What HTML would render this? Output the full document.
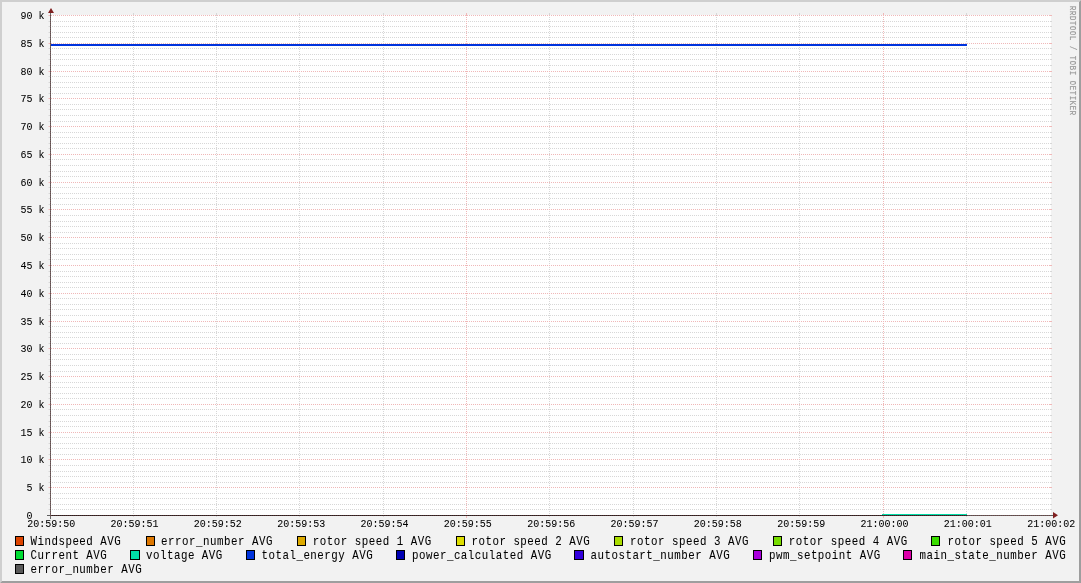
<!DOCTYPE html>
<html><head><meta charset="utf-8"><style>
html,body{margin:0;padding:0;background:#f2f2f2;overflow:hidden;}
svg{display:block;will-change:transform;}
</style></head><body><svg width="1081" height="583" viewBox="0 0 1081 583"><rect x="0" y="0" width="1081" height="583" fill="#f2f2f2"/>
<polygon points="0,583 2,581 2,2 1079,2 1081,0 0,0" fill="#cfcfcf"/>
<polygon points="2,581 1079,581 1079,2 1081,0 1081,583 0,583" fill="#9e9e9e"/>
<rect x="50" y="15" width="1001" height="500" fill="#ffffff"/>
<g shape-rendering="crispEdges"><rect x="48" y="509" width="1" height="1" fill="#d7d7d7" fill-opacity="0.5"/><rect x="49" y="509" width="1" height="1" fill="#d7d7d7"/><rect x="1050" y="509" width="2" height="1" fill="#d7d7d7"/><line x1="50" y1="509.5" x2="1050" y2="509.5" stroke="#d7d7d7" stroke-width="1" stroke-dasharray="1 1"/><rect x="48" y="504" width="1" height="1" fill="#d7d7d7" fill-opacity="0.5"/><rect x="49" y="504" width="1" height="1" fill="#d7d7d7"/><rect x="1050" y="504" width="2" height="1" fill="#d7d7d7"/><line x1="50" y1="504.5" x2="1050" y2="504.5" stroke="#d7d7d7" stroke-width="1" stroke-dasharray="1 1"/><rect x="48" y="498" width="1" height="1" fill="#d7d7d7" fill-opacity="0.5"/><rect x="49" y="498" width="1" height="1" fill="#d7d7d7"/><rect x="1050" y="498" width="2" height="1" fill="#d7d7d7"/><line x1="50" y1="498.5" x2="1050" y2="498.5" stroke="#d7d7d7" stroke-width="1" stroke-dasharray="1 1"/><rect x="48" y="493" width="1" height="1" fill="#d7d7d7" fill-opacity="0.5"/><rect x="49" y="493" width="1" height="1" fill="#d7d7d7"/><rect x="1050" y="493" width="2" height="1" fill="#d7d7d7"/><line x1="50" y1="493.5" x2="1050" y2="493.5" stroke="#d7d7d7" stroke-width="1" stroke-dasharray="1 1"/><rect x="48" y="482" width="1" height="1" fill="#d7d7d7" fill-opacity="0.5"/><rect x="49" y="482" width="1" height="1" fill="#d7d7d7"/><rect x="1050" y="482" width="2" height="1" fill="#d7d7d7"/><line x1="50" y1="482.5" x2="1050" y2="482.5" stroke="#d7d7d7" stroke-width="1" stroke-dasharray="1 1"/><rect x="48" y="476" width="1" height="1" fill="#d7d7d7" fill-opacity="0.5"/><rect x="49" y="476" width="1" height="1" fill="#d7d7d7"/><rect x="1050" y="476" width="2" height="1" fill="#d7d7d7"/><line x1="50" y1="476.5" x2="1050" y2="476.5" stroke="#d7d7d7" stroke-width="1" stroke-dasharray="1 1"/><rect x="48" y="471" width="1" height="1" fill="#d7d7d7" fill-opacity="0.5"/><rect x="49" y="471" width="1" height="1" fill="#d7d7d7"/><rect x="1050" y="471" width="2" height="1" fill="#d7d7d7"/><line x1="50" y1="471.5" x2="1050" y2="471.5" stroke="#d7d7d7" stroke-width="1" stroke-dasharray="1 1"/><rect x="48" y="465" width="1" height="1" fill="#d7d7d7" fill-opacity="0.5"/><rect x="49" y="465" width="1" height="1" fill="#d7d7d7"/><rect x="1050" y="465" width="2" height="1" fill="#d7d7d7"/><line x1="50" y1="465.5" x2="1050" y2="465.5" stroke="#d7d7d7" stroke-width="1" stroke-dasharray="1 1"/><rect x="48" y="454" width="1" height="1" fill="#d7d7d7" fill-opacity="0.5"/><rect x="49" y="454" width="1" height="1" fill="#d7d7d7"/><rect x="1050" y="454" width="2" height="1" fill="#d7d7d7"/><line x1="50" y1="454.5" x2="1050" y2="454.5" stroke="#d7d7d7" stroke-width="1" stroke-dasharray="1 1"/><rect x="48" y="448" width="1" height="1" fill="#d7d7d7" fill-opacity="0.5"/><rect x="49" y="448" width="1" height="1" fill="#d7d7d7"/><rect x="1050" y="448" width="2" height="1" fill="#d7d7d7"/><line x1="50" y1="448.5" x2="1050" y2="448.5" stroke="#d7d7d7" stroke-width="1" stroke-dasharray="1 1"/><rect x="48" y="443" width="1" height="1" fill="#d7d7d7" fill-opacity="0.5"/><rect x="49" y="443" width="1" height="1" fill="#d7d7d7"/><rect x="1050" y="443" width="2" height="1" fill="#d7d7d7"/><line x1="50" y1="443.5" x2="1050" y2="443.5" stroke="#d7d7d7" stroke-width="1" stroke-dasharray="1 1"/><rect x="48" y="437" width="1" height="1" fill="#d7d7d7" fill-opacity="0.5"/><rect x="49" y="437" width="1" height="1" fill="#d7d7d7"/><rect x="1050" y="437" width="2" height="1" fill="#d7d7d7"/><line x1="50" y1="437.5" x2="1050" y2="437.5" stroke="#d7d7d7" stroke-width="1" stroke-dasharray="1 1"/><rect x="48" y="426" width="1" height="1" fill="#d7d7d7" fill-opacity="0.5"/><rect x="49" y="426" width="1" height="1" fill="#d7d7d7"/><rect x="1050" y="426" width="2" height="1" fill="#d7d7d7"/><line x1="50" y1="426.5" x2="1050" y2="426.5" stroke="#d7d7d7" stroke-width="1" stroke-dasharray="1 1"/><rect x="48" y="421" width="1" height="1" fill="#d7d7d7" fill-opacity="0.5"/><rect x="49" y="421" width="1" height="1" fill="#d7d7d7"/><rect x="1050" y="421" width="2" height="1" fill="#d7d7d7"/><line x1="50" y1="421.5" x2="1050" y2="421.5" stroke="#d7d7d7" stroke-width="1" stroke-dasharray="1 1"/><rect x="48" y="415" width="1" height="1" fill="#d7d7d7" fill-opacity="0.5"/><rect x="49" y="415" width="1" height="1" fill="#d7d7d7"/><rect x="1050" y="415" width="2" height="1" fill="#d7d7d7"/><line x1="50" y1="415.5" x2="1050" y2="415.5" stroke="#d7d7d7" stroke-width="1" stroke-dasharray="1 1"/><rect x="48" y="409" width="1" height="1" fill="#d7d7d7" fill-opacity="0.5"/><rect x="49" y="409" width="1" height="1" fill="#d7d7d7"/><rect x="1050" y="409" width="2" height="1" fill="#d7d7d7"/><line x1="50" y1="409.5" x2="1050" y2="409.5" stroke="#d7d7d7" stroke-width="1" stroke-dasharray="1 1"/><rect x="48" y="398" width="1" height="1" fill="#d7d7d7" fill-opacity="0.5"/><rect x="49" y="398" width="1" height="1" fill="#d7d7d7"/><rect x="1050" y="398" width="2" height="1" fill="#d7d7d7"/><line x1="50" y1="398.5" x2="1050" y2="398.5" stroke="#d7d7d7" stroke-width="1" stroke-dasharray="1 1"/><rect x="48" y="393" width="1" height="1" fill="#d7d7d7" fill-opacity="0.5"/><rect x="49" y="393" width="1" height="1" fill="#d7d7d7"/><rect x="1050" y="393" width="2" height="1" fill="#d7d7d7"/><line x1="50" y1="393.5" x2="1050" y2="393.5" stroke="#d7d7d7" stroke-width="1" stroke-dasharray="1 1"/><rect x="48" y="387" width="1" height="1" fill="#d7d7d7" fill-opacity="0.5"/><rect x="49" y="387" width="1" height="1" fill="#d7d7d7"/><rect x="1050" y="387" width="2" height="1" fill="#d7d7d7"/><line x1="50" y1="387.5" x2="1050" y2="387.5" stroke="#d7d7d7" stroke-width="1" stroke-dasharray="1 1"/><rect x="48" y="382" width="1" height="1" fill="#d7d7d7" fill-opacity="0.5"/><rect x="49" y="382" width="1" height="1" fill="#d7d7d7"/><rect x="1050" y="382" width="2" height="1" fill="#d7d7d7"/><line x1="50" y1="382.5" x2="1050" y2="382.5" stroke="#d7d7d7" stroke-width="1" stroke-dasharray="1 1"/><rect x="48" y="371" width="1" height="1" fill="#d7d7d7" fill-opacity="0.5"/><rect x="49" y="371" width="1" height="1" fill="#d7d7d7"/><rect x="1050" y="371" width="2" height="1" fill="#d7d7d7"/><line x1="50" y1="371.5" x2="1050" y2="371.5" stroke="#d7d7d7" stroke-width="1" stroke-dasharray="1 1"/><rect x="48" y="365" width="1" height="1" fill="#d7d7d7" fill-opacity="0.5"/><rect x="49" y="365" width="1" height="1" fill="#d7d7d7"/><rect x="1050" y="365" width="2" height="1" fill="#d7d7d7"/><line x1="50" y1="365.5" x2="1050" y2="365.5" stroke="#d7d7d7" stroke-width="1" stroke-dasharray="1 1"/><rect x="48" y="359" width="1" height="1" fill="#d7d7d7" fill-opacity="0.5"/><rect x="49" y="359" width="1" height="1" fill="#d7d7d7"/><rect x="1050" y="359" width="2" height="1" fill="#d7d7d7"/><line x1="50" y1="359.5" x2="1050" y2="359.5" stroke="#d7d7d7" stroke-width="1" stroke-dasharray="1 1"/><rect x="48" y="354" width="1" height="1" fill="#d7d7d7" fill-opacity="0.5"/><rect x="49" y="354" width="1" height="1" fill="#d7d7d7"/><rect x="1050" y="354" width="2" height="1" fill="#d7d7d7"/><line x1="50" y1="354.5" x2="1050" y2="354.5" stroke="#d7d7d7" stroke-width="1" stroke-dasharray="1 1"/><rect x="48" y="343" width="1" height="1" fill="#d7d7d7" fill-opacity="0.5"/><rect x="49" y="343" width="1" height="1" fill="#d7d7d7"/><rect x="1050" y="343" width="2" height="1" fill="#d7d7d7"/><line x1="50" y1="343.5" x2="1050" y2="343.5" stroke="#d7d7d7" stroke-width="1" stroke-dasharray="1 1"/><rect x="48" y="337" width="1" height="1" fill="#d7d7d7" fill-opacity="0.5"/><rect x="49" y="337" width="1" height="1" fill="#d7d7d7"/><rect x="1050" y="337" width="2" height="1" fill="#d7d7d7"/><line x1="50" y1="337.5" x2="1050" y2="337.5" stroke="#d7d7d7" stroke-width="1" stroke-dasharray="1 1"/><rect x="48" y="332" width="1" height="1" fill="#d7d7d7" fill-opacity="0.5"/><rect x="49" y="332" width="1" height="1" fill="#d7d7d7"/><rect x="1050" y="332" width="2" height="1" fill="#d7d7d7"/><line x1="50" y1="332.5" x2="1050" y2="332.5" stroke="#d7d7d7" stroke-width="1" stroke-dasharray="1 1"/><rect x="48" y="326" width="1" height="1" fill="#d7d7d7" fill-opacity="0.5"/><rect x="49" y="326" width="1" height="1" fill="#d7d7d7"/><rect x="1050" y="326" width="2" height="1" fill="#d7d7d7"/><line x1="50" y1="326.5" x2="1050" y2="326.5" stroke="#d7d7d7" stroke-width="1" stroke-dasharray="1 1"/><rect x="48" y="315" width="1" height="1" fill="#d7d7d7" fill-opacity="0.5"/><rect x="49" y="315" width="1" height="1" fill="#d7d7d7"/><rect x="1050" y="315" width="2" height="1" fill="#d7d7d7"/><line x1="50" y1="315.5" x2="1050" y2="315.5" stroke="#d7d7d7" stroke-width="1" stroke-dasharray="1 1"/><rect x="48" y="309" width="1" height="1" fill="#d7d7d7" fill-opacity="0.5"/><rect x="49" y="309" width="1" height="1" fill="#d7d7d7"/><rect x="1050" y="309" width="2" height="1" fill="#d7d7d7"/><line x1="50" y1="309.5" x2="1050" y2="309.5" stroke="#d7d7d7" stroke-width="1" stroke-dasharray="1 1"/><rect x="48" y="304" width="1" height="1" fill="#d7d7d7" fill-opacity="0.5"/><rect x="49" y="304" width="1" height="1" fill="#d7d7d7"/><rect x="1050" y="304" width="2" height="1" fill="#d7d7d7"/><line x1="50" y1="304.5" x2="1050" y2="304.5" stroke="#d7d7d7" stroke-width="1" stroke-dasharray="1 1"/><rect x="48" y="298" width="1" height="1" fill="#d7d7d7" fill-opacity="0.5"/><rect x="49" y="298" width="1" height="1" fill="#d7d7d7"/><rect x="1050" y="298" width="2" height="1" fill="#d7d7d7"/><line x1="50" y1="298.5" x2="1050" y2="298.5" stroke="#d7d7d7" stroke-width="1" stroke-dasharray="1 1"/><rect x="48" y="287" width="1" height="1" fill="#d7d7d7" fill-opacity="0.5"/><rect x="49" y="287" width="1" height="1" fill="#d7d7d7"/><rect x="1050" y="287" width="2" height="1" fill="#d7d7d7"/><line x1="50" y1="287.5" x2="1050" y2="287.5" stroke="#d7d7d7" stroke-width="1" stroke-dasharray="1 1"/><rect x="48" y="282" width="1" height="1" fill="#d7d7d7" fill-opacity="0.5"/><rect x="49" y="282" width="1" height="1" fill="#d7d7d7"/><rect x="1050" y="282" width="2" height="1" fill="#d7d7d7"/><line x1="50" y1="282.5" x2="1050" y2="282.5" stroke="#d7d7d7" stroke-width="1" stroke-dasharray="1 1"/><rect x="48" y="276" width="1" height="1" fill="#d7d7d7" fill-opacity="0.5"/><rect x="49" y="276" width="1" height="1" fill="#d7d7d7"/><rect x="1050" y="276" width="2" height="1" fill="#d7d7d7"/><line x1="50" y1="276.5" x2="1050" y2="276.5" stroke="#d7d7d7" stroke-width="1" stroke-dasharray="1 1"/><rect x="48" y="271" width="1" height="1" fill="#d7d7d7" fill-opacity="0.5"/><rect x="49" y="271" width="1" height="1" fill="#d7d7d7"/><rect x="1050" y="271" width="2" height="1" fill="#d7d7d7"/><line x1="50" y1="271.5" x2="1050" y2="271.5" stroke="#d7d7d7" stroke-width="1" stroke-dasharray="1 1"/><rect x="48" y="259" width="1" height="1" fill="#d7d7d7" fill-opacity="0.5"/><rect x="49" y="259" width="1" height="1" fill="#d7d7d7"/><rect x="1050" y="259" width="2" height="1" fill="#d7d7d7"/><line x1="50" y1="259.5" x2="1050" y2="259.5" stroke="#d7d7d7" stroke-width="1" stroke-dasharray="1 1"/><rect x="48" y="254" width="1" height="1" fill="#d7d7d7" fill-opacity="0.5"/><rect x="49" y="254" width="1" height="1" fill="#d7d7d7"/><rect x="1050" y="254" width="2" height="1" fill="#d7d7d7"/><line x1="50" y1="254.5" x2="1050" y2="254.5" stroke="#d7d7d7" stroke-width="1" stroke-dasharray="1 1"/><rect x="48" y="248" width="1" height="1" fill="#d7d7d7" fill-opacity="0.5"/><rect x="49" y="248" width="1" height="1" fill="#d7d7d7"/><rect x="1050" y="248" width="2" height="1" fill="#d7d7d7"/><line x1="50" y1="248.5" x2="1050" y2="248.5" stroke="#d7d7d7" stroke-width="1" stroke-dasharray="1 1"/><rect x="48" y="243" width="1" height="1" fill="#d7d7d7" fill-opacity="0.5"/><rect x="49" y="243" width="1" height="1" fill="#d7d7d7"/><rect x="1050" y="243" width="2" height="1" fill="#d7d7d7"/><line x1="50" y1="243.5" x2="1050" y2="243.5" stroke="#d7d7d7" stroke-width="1" stroke-dasharray="1 1"/><rect x="48" y="232" width="1" height="1" fill="#d7d7d7" fill-opacity="0.5"/><rect x="49" y="232" width="1" height="1" fill="#d7d7d7"/><rect x="1050" y="232" width="2" height="1" fill="#d7d7d7"/><line x1="50" y1="232.5" x2="1050" y2="232.5" stroke="#d7d7d7" stroke-width="1" stroke-dasharray="1 1"/><rect x="48" y="226" width="1" height="1" fill="#d7d7d7" fill-opacity="0.5"/><rect x="49" y="226" width="1" height="1" fill="#d7d7d7"/><rect x="1050" y="226" width="2" height="1" fill="#d7d7d7"/><line x1="50" y1="226.5" x2="1050" y2="226.5" stroke="#d7d7d7" stroke-width="1" stroke-dasharray="1 1"/><rect x="48" y="221" width="1" height="1" fill="#d7d7d7" fill-opacity="0.5"/><rect x="49" y="221" width="1" height="1" fill="#d7d7d7"/><rect x="1050" y="221" width="2" height="1" fill="#d7d7d7"/><line x1="50" y1="221.5" x2="1050" y2="221.5" stroke="#d7d7d7" stroke-width="1" stroke-dasharray="1 1"/><rect x="48" y="215" width="1" height="1" fill="#d7d7d7" fill-opacity="0.5"/><rect x="49" y="215" width="1" height="1" fill="#d7d7d7"/><rect x="1050" y="215" width="2" height="1" fill="#d7d7d7"/><line x1="50" y1="215.5" x2="1050" y2="215.5" stroke="#d7d7d7" stroke-width="1" stroke-dasharray="1 1"/><rect x="48" y="204" width="1" height="1" fill="#d7d7d7" fill-opacity="0.5"/><rect x="49" y="204" width="1" height="1" fill="#d7d7d7"/><rect x="1050" y="204" width="2" height="1" fill="#d7d7d7"/><line x1="50" y1="204.5" x2="1050" y2="204.5" stroke="#d7d7d7" stroke-width="1" stroke-dasharray="1 1"/><rect x="48" y="198" width="1" height="1" fill="#d7d7d7" fill-opacity="0.5"/><rect x="49" y="198" width="1" height="1" fill="#d7d7d7"/><rect x="1050" y="198" width="2" height="1" fill="#d7d7d7"/><line x1="50" y1="198.5" x2="1050" y2="198.5" stroke="#d7d7d7" stroke-width="1" stroke-dasharray="1 1"/><rect x="48" y="193" width="1" height="1" fill="#d7d7d7" fill-opacity="0.5"/><rect x="49" y="193" width="1" height="1" fill="#d7d7d7"/><rect x="1050" y="193" width="2" height="1" fill="#d7d7d7"/><line x1="50" y1="193.5" x2="1050" y2="193.5" stroke="#d7d7d7" stroke-width="1" stroke-dasharray="1 1"/><rect x="48" y="187" width="1" height="1" fill="#d7d7d7" fill-opacity="0.5"/><rect x="49" y="187" width="1" height="1" fill="#d7d7d7"/><rect x="1050" y="187" width="2" height="1" fill="#d7d7d7"/><line x1="50" y1="187.5" x2="1050" y2="187.5" stroke="#d7d7d7" stroke-width="1" stroke-dasharray="1 1"/><rect x="48" y="176" width="1" height="1" fill="#d7d7d7" fill-opacity="0.5"/><rect x="49" y="176" width="1" height="1" fill="#d7d7d7"/><rect x="1050" y="176" width="2" height="1" fill="#d7d7d7"/><line x1="50" y1="176.5" x2="1050" y2="176.5" stroke="#d7d7d7" stroke-width="1" stroke-dasharray="1 1"/><rect x="48" y="171" width="1" height="1" fill="#d7d7d7" fill-opacity="0.5"/><rect x="49" y="171" width="1" height="1" fill="#d7d7d7"/><rect x="1050" y="171" width="2" height="1" fill="#d7d7d7"/><line x1="50" y1="171.5" x2="1050" y2="171.5" stroke="#d7d7d7" stroke-width="1" stroke-dasharray="1 1"/><rect x="48" y="165" width="1" height="1" fill="#d7d7d7" fill-opacity="0.5"/><rect x="49" y="165" width="1" height="1" fill="#d7d7d7"/><rect x="1050" y="165" width="2" height="1" fill="#d7d7d7"/><line x1="50" y1="165.5" x2="1050" y2="165.5" stroke="#d7d7d7" stroke-width="1" stroke-dasharray="1 1"/><rect x="48" y="159" width="1" height="1" fill="#d7d7d7" fill-opacity="0.5"/><rect x="49" y="159" width="1" height="1" fill="#d7d7d7"/><rect x="1050" y="159" width="2" height="1" fill="#d7d7d7"/><line x1="50" y1="159.5" x2="1050" y2="159.5" stroke="#d7d7d7" stroke-width="1" stroke-dasharray="1 1"/><rect x="48" y="148" width="1" height="1" fill="#d7d7d7" fill-opacity="0.5"/><rect x="49" y="148" width="1" height="1" fill="#d7d7d7"/><rect x="1050" y="148" width="2" height="1" fill="#d7d7d7"/><line x1="50" y1="148.5" x2="1050" y2="148.5" stroke="#d7d7d7" stroke-width="1" stroke-dasharray="1 1"/><rect x="48" y="143" width="1" height="1" fill="#d7d7d7" fill-opacity="0.5"/><rect x="49" y="143" width="1" height="1" fill="#d7d7d7"/><rect x="1050" y="143" width="2" height="1" fill="#d7d7d7"/><line x1="50" y1="143.5" x2="1050" y2="143.5" stroke="#d7d7d7" stroke-width="1" stroke-dasharray="1 1"/><rect x="48" y="137" width="1" height="1" fill="#d7d7d7" fill-opacity="0.5"/><rect x="49" y="137" width="1" height="1" fill="#d7d7d7"/><rect x="1050" y="137" width="2" height="1" fill="#d7d7d7"/><line x1="50" y1="137.5" x2="1050" y2="137.5" stroke="#d7d7d7" stroke-width="1" stroke-dasharray="1 1"/><rect x="48" y="132" width="1" height="1" fill="#d7d7d7" fill-opacity="0.5"/><rect x="49" y="132" width="1" height="1" fill="#d7d7d7"/><rect x="1050" y="132" width="2" height="1" fill="#d7d7d7"/><line x1="50" y1="132.5" x2="1050" y2="132.5" stroke="#d7d7d7" stroke-width="1" stroke-dasharray="1 1"/><rect x="48" y="121" width="1" height="1" fill="#d7d7d7" fill-opacity="0.5"/><rect x="49" y="121" width="1" height="1" fill="#d7d7d7"/><rect x="1050" y="121" width="2" height="1" fill="#d7d7d7"/><line x1="50" y1="121.5" x2="1050" y2="121.5" stroke="#d7d7d7" stroke-width="1" stroke-dasharray="1 1"/><rect x="48" y="115" width="1" height="1" fill="#d7d7d7" fill-opacity="0.5"/><rect x="49" y="115" width="1" height="1" fill="#d7d7d7"/><rect x="1050" y="115" width="2" height="1" fill="#d7d7d7"/><line x1="50" y1="115.5" x2="1050" y2="115.5" stroke="#d7d7d7" stroke-width="1" stroke-dasharray="1 1"/><rect x="48" y="109" width="1" height="1" fill="#d7d7d7" fill-opacity="0.5"/><rect x="49" y="109" width="1" height="1" fill="#d7d7d7"/><rect x="1050" y="109" width="2" height="1" fill="#d7d7d7"/><line x1="50" y1="109.5" x2="1050" y2="109.5" stroke="#d7d7d7" stroke-width="1" stroke-dasharray="1 1"/><rect x="48" y="104" width="1" height="1" fill="#d7d7d7" fill-opacity="0.5"/><rect x="49" y="104" width="1" height="1" fill="#d7d7d7"/><rect x="1050" y="104" width="2" height="1" fill="#d7d7d7"/><line x1="50" y1="104.5" x2="1050" y2="104.5" stroke="#d7d7d7" stroke-width="1" stroke-dasharray="1 1"/><rect x="48" y="93" width="1" height="1" fill="#d7d7d7" fill-opacity="0.5"/><rect x="49" y="93" width="1" height="1" fill="#d7d7d7"/><rect x="1050" y="93" width="2" height="1" fill="#d7d7d7"/><line x1="50" y1="93.5" x2="1050" y2="93.5" stroke="#d7d7d7" stroke-width="1" stroke-dasharray="1 1"/><rect x="48" y="87" width="1" height="1" fill="#d7d7d7" fill-opacity="0.5"/><rect x="49" y="87" width="1" height="1" fill="#d7d7d7"/><rect x="1050" y="87" width="2" height="1" fill="#d7d7d7"/><line x1="50" y1="87.5" x2="1050" y2="87.5" stroke="#d7d7d7" stroke-width="1" stroke-dasharray="1 1"/><rect x="48" y="82" width="1" height="1" fill="#d7d7d7" fill-opacity="0.5"/><rect x="49" y="82" width="1" height="1" fill="#d7d7d7"/><rect x="1050" y="82" width="2" height="1" fill="#d7d7d7"/><line x1="50" y1="82.5" x2="1050" y2="82.5" stroke="#d7d7d7" stroke-width="1" stroke-dasharray="1 1"/><rect x="48" y="76" width="1" height="1" fill="#d7d7d7" fill-opacity="0.5"/><rect x="49" y="76" width="1" height="1" fill="#d7d7d7"/><rect x="1050" y="76" width="2" height="1" fill="#d7d7d7"/><line x1="50" y1="76.5" x2="1050" y2="76.5" stroke="#d7d7d7" stroke-width="1" stroke-dasharray="1 1"/><rect x="48" y="65" width="1" height="1" fill="#d7d7d7" fill-opacity="0.5"/><rect x="49" y="65" width="1" height="1" fill="#d7d7d7"/><rect x="1050" y="65" width="2" height="1" fill="#d7d7d7"/><line x1="50" y1="65.5" x2="1050" y2="65.5" stroke="#d7d7d7" stroke-width="1" stroke-dasharray="1 1"/><rect x="48" y="59" width="1" height="1" fill="#d7d7d7" fill-opacity="0.5"/><rect x="49" y="59" width="1" height="1" fill="#d7d7d7"/><rect x="1050" y="59" width="2" height="1" fill="#d7d7d7"/><line x1="50" y1="59.5" x2="1050" y2="59.5" stroke="#d7d7d7" stroke-width="1" stroke-dasharray="1 1"/><rect x="48" y="54" width="1" height="1" fill="#d7d7d7" fill-opacity="0.5"/><rect x="49" y="54" width="1" height="1" fill="#d7d7d7"/><rect x="1050" y="54" width="2" height="1" fill="#d7d7d7"/><line x1="50" y1="54.5" x2="1050" y2="54.5" stroke="#d7d7d7" stroke-width="1" stroke-dasharray="1 1"/><rect x="48" y="48" width="1" height="1" fill="#d7d7d7" fill-opacity="0.5"/><rect x="49" y="48" width="1" height="1" fill="#d7d7d7"/><rect x="1050" y="48" width="2" height="1" fill="#d7d7d7"/><line x1="50" y1="48.5" x2="1050" y2="48.5" stroke="#d7d7d7" stroke-width="1" stroke-dasharray="1 1"/><rect x="48" y="37" width="1" height="1" fill="#d7d7d7" fill-opacity="0.5"/><rect x="49" y="37" width="1" height="1" fill="#d7d7d7"/><rect x="1050" y="37" width="2" height="1" fill="#d7d7d7"/><line x1="50" y1="37.5" x2="1050" y2="37.5" stroke="#d7d7d7" stroke-width="1" stroke-dasharray="1 1"/><rect x="48" y="32" width="1" height="1" fill="#d7d7d7" fill-opacity="0.5"/><rect x="49" y="32" width="1" height="1" fill="#d7d7d7"/><rect x="1050" y="32" width="2" height="1" fill="#d7d7d7"/><line x1="50" y1="32.5" x2="1050" y2="32.5" stroke="#d7d7d7" stroke-width="1" stroke-dasharray="1 1"/><rect x="48" y="26" width="1" height="1" fill="#d7d7d7" fill-opacity="0.5"/><rect x="49" y="26" width="1" height="1" fill="#d7d7d7"/><rect x="1050" y="26" width="2" height="1" fill="#d7d7d7"/><line x1="50" y1="26.5" x2="1050" y2="26.5" stroke="#d7d7d7" stroke-width="1" stroke-dasharray="1 1"/><rect x="48" y="21" width="1" height="1" fill="#d7d7d7" fill-opacity="0.5"/><rect x="49" y="21" width="1" height="1" fill="#d7d7d7"/><rect x="1050" y="21" width="2" height="1" fill="#d7d7d7"/><line x1="50" y1="21.5" x2="1050" y2="21.5" stroke="#d7d7d7" stroke-width="1" stroke-dasharray="1 1"/><line x1="133.5" y1="516" x2="133.5" y2="15" stroke="#d7d7d7" stroke-width="1" stroke-dasharray="1 1"/><rect x="133" y="13" width="1" height="2" fill="#d7d7d7"/><rect x="133" y="516" width="1" height="1" fill="#d7d7d7"/><line x1="216.5" y1="516" x2="216.5" y2="15" stroke="#d7d7d7" stroke-width="1" stroke-dasharray="1 1"/><rect x="216" y="13" width="1" height="2" fill="#d7d7d7"/><rect x="216" y="516" width="1" height="1" fill="#d7d7d7"/><line x1="299.5" y1="516" x2="299.5" y2="15" stroke="#d7d7d7" stroke-width="1" stroke-dasharray="1 1"/><rect x="299" y="13" width="1" height="2" fill="#d7d7d7"/><rect x="299" y="516" width="1" height="1" fill="#d7d7d7"/><line x1="383.5" y1="516" x2="383.5" y2="15" stroke="#d7d7d7" stroke-width="1" stroke-dasharray="1 1"/><rect x="383" y="13" width="1" height="2" fill="#d7d7d7"/><rect x="383" y="516" width="1" height="1" fill="#d7d7d7"/><line x1="549.5" y1="516" x2="549.5" y2="15" stroke="#d7d7d7" stroke-width="1" stroke-dasharray="1 1"/><rect x="549" y="13" width="1" height="2" fill="#d7d7d7"/><rect x="549" y="516" width="1" height="1" fill="#d7d7d7"/><line x1="633.5" y1="516" x2="633.5" y2="15" stroke="#d7d7d7" stroke-width="1" stroke-dasharray="1 1"/><rect x="633" y="13" width="1" height="2" fill="#d7d7d7"/><rect x="633" y="516" width="1" height="1" fill="#d7d7d7"/><line x1="716.5" y1="516" x2="716.5" y2="15" stroke="#d7d7d7" stroke-width="1" stroke-dasharray="1 1"/><rect x="716" y="13" width="1" height="2" fill="#d7d7d7"/><rect x="716" y="516" width="1" height="1" fill="#d7d7d7"/><line x1="799.5" y1="516" x2="799.5" y2="15" stroke="#d7d7d7" stroke-width="1" stroke-dasharray="1 1"/><rect x="799" y="13" width="1" height="2" fill="#d7d7d7"/><rect x="799" y="516" width="1" height="1" fill="#d7d7d7"/><line x1="966.5" y1="516" x2="966.5" y2="15" stroke="#d7d7d7" stroke-width="1" stroke-dasharray="1 1"/><rect x="966" y="13" width="1" height="2" fill="#d7d7d7"/><rect x="966" y="516" width="1" height="1" fill="#d7d7d7"/><rect x="48" y="515" width="1" height="1" fill="#f0b8b8" fill-opacity="0.5"/><rect x="49" y="515" width="1" height="1" fill="#f0b8b8"/><rect x="1050" y="515" width="2" height="1" fill="#f0b8b8"/><line x1="51" y1="515.5" x2="1050" y2="515.5" stroke="#f0b8b8" stroke-width="1" stroke-dasharray="1 1"/><rect x="48" y="487" width="1" height="1" fill="#f0b8b8" fill-opacity="0.5"/><rect x="49" y="487" width="1" height="1" fill="#f0b8b8"/><rect x="1050" y="487" width="2" height="1" fill="#f0b8b8"/><line x1="51" y1="487.5" x2="1050" y2="487.5" stroke="#f0b8b8" stroke-width="1" stroke-dasharray="1 1"/><rect x="48" y="459" width="1" height="1" fill="#f0b8b8" fill-opacity="0.5"/><rect x="49" y="459" width="1" height="1" fill="#f0b8b8"/><rect x="1050" y="459" width="2" height="1" fill="#f0b8b8"/><line x1="51" y1="459.5" x2="1050" y2="459.5" stroke="#f0b8b8" stroke-width="1" stroke-dasharray="1 1"/><rect x="48" y="432" width="1" height="1" fill="#f0b8b8" fill-opacity="0.5"/><rect x="49" y="432" width="1" height="1" fill="#f0b8b8"/><rect x="1050" y="432" width="2" height="1" fill="#f0b8b8"/><line x1="51" y1="432.5" x2="1050" y2="432.5" stroke="#f0b8b8" stroke-width="1" stroke-dasharray="1 1"/><rect x="48" y="404" width="1" height="1" fill="#f0b8b8" fill-opacity="0.5"/><rect x="49" y="404" width="1" height="1" fill="#f0b8b8"/><rect x="1050" y="404" width="2" height="1" fill="#f0b8b8"/><line x1="51" y1="404.5" x2="1050" y2="404.5" stroke="#f0b8b8" stroke-width="1" stroke-dasharray="1 1"/><rect x="48" y="376" width="1" height="1" fill="#f0b8b8" fill-opacity="0.5"/><rect x="49" y="376" width="1" height="1" fill="#f0b8b8"/><rect x="1050" y="376" width="2" height="1" fill="#f0b8b8"/><line x1="51" y1="376.5" x2="1050" y2="376.5" stroke="#f0b8b8" stroke-width="1" stroke-dasharray="1 1"/><rect x="48" y="348" width="1" height="1" fill="#f0b8b8" fill-opacity="0.5"/><rect x="49" y="348" width="1" height="1" fill="#f0b8b8"/><rect x="1050" y="348" width="2" height="1" fill="#f0b8b8"/><line x1="51" y1="348.5" x2="1050" y2="348.5" stroke="#f0b8b8" stroke-width="1" stroke-dasharray="1 1"/><rect x="48" y="321" width="1" height="1" fill="#f0b8b8" fill-opacity="0.5"/><rect x="49" y="321" width="1" height="1" fill="#f0b8b8"/><rect x="1050" y="321" width="2" height="1" fill="#f0b8b8"/><line x1="51" y1="321.5" x2="1050" y2="321.5" stroke="#f0b8b8" stroke-width="1" stroke-dasharray="1 1"/><rect x="48" y="293" width="1" height="1" fill="#f0b8b8" fill-opacity="0.5"/><rect x="49" y="293" width="1" height="1" fill="#f0b8b8"/><rect x="1050" y="293" width="2" height="1" fill="#f0b8b8"/><line x1="51" y1="293.5" x2="1050" y2="293.5" stroke="#f0b8b8" stroke-width="1" stroke-dasharray="1 1"/><rect x="48" y="265" width="1" height="1" fill="#f0b8b8" fill-opacity="0.5"/><rect x="49" y="265" width="1" height="1" fill="#f0b8b8"/><rect x="1050" y="265" width="2" height="1" fill="#f0b8b8"/><line x1="51" y1="265.5" x2="1050" y2="265.5" stroke="#f0b8b8" stroke-width="1" stroke-dasharray="1 1"/><rect x="48" y="237" width="1" height="1" fill="#f0b8b8" fill-opacity="0.5"/><rect x="49" y="237" width="1" height="1" fill="#f0b8b8"/><rect x="1050" y="237" width="2" height="1" fill="#f0b8b8"/><line x1="51" y1="237.5" x2="1050" y2="237.5" stroke="#f0b8b8" stroke-width="1" stroke-dasharray="1 1"/><rect x="48" y="209" width="1" height="1" fill="#f0b8b8" fill-opacity="0.5"/><rect x="49" y="209" width="1" height="1" fill="#f0b8b8"/><rect x="1050" y="209" width="2" height="1" fill="#f0b8b8"/><line x1="51" y1="209.5" x2="1050" y2="209.5" stroke="#f0b8b8" stroke-width="1" stroke-dasharray="1 1"/><rect x="48" y="182" width="1" height="1" fill="#f0b8b8" fill-opacity="0.5"/><rect x="49" y="182" width="1" height="1" fill="#f0b8b8"/><rect x="1050" y="182" width="2" height="1" fill="#f0b8b8"/><line x1="51" y1="182.5" x2="1050" y2="182.5" stroke="#f0b8b8" stroke-width="1" stroke-dasharray="1 1"/><rect x="48" y="154" width="1" height="1" fill="#f0b8b8" fill-opacity="0.5"/><rect x="49" y="154" width="1" height="1" fill="#f0b8b8"/><rect x="1050" y="154" width="2" height="1" fill="#f0b8b8"/><line x1="51" y1="154.5" x2="1050" y2="154.5" stroke="#f0b8b8" stroke-width="1" stroke-dasharray="1 1"/><rect x="48" y="126" width="1" height="1" fill="#f0b8b8" fill-opacity="0.5"/><rect x="49" y="126" width="1" height="1" fill="#f0b8b8"/><rect x="1050" y="126" width="2" height="1" fill="#f0b8b8"/><line x1="51" y1="126.5" x2="1050" y2="126.5" stroke="#f0b8b8" stroke-width="1" stroke-dasharray="1 1"/><rect x="48" y="98" width="1" height="1" fill="#f0b8b8" fill-opacity="0.5"/><rect x="49" y="98" width="1" height="1" fill="#f0b8b8"/><rect x="1050" y="98" width="2" height="1" fill="#f0b8b8"/><line x1="51" y1="98.5" x2="1050" y2="98.5" stroke="#f0b8b8" stroke-width="1" stroke-dasharray="1 1"/><rect x="48" y="71" width="1" height="1" fill="#f0b8b8" fill-opacity="0.5"/><rect x="49" y="71" width="1" height="1" fill="#f0b8b8"/><rect x="1050" y="71" width="2" height="1" fill="#f0b8b8"/><line x1="51" y1="71.5" x2="1050" y2="71.5" stroke="#f0b8b8" stroke-width="1" stroke-dasharray="1 1"/><rect x="48" y="43" width="1" height="1" fill="#f0b8b8" fill-opacity="0.5"/><rect x="49" y="43" width="1" height="1" fill="#f0b8b8"/><rect x="1050" y="43" width="2" height="1" fill="#f0b8b8"/><line x1="51" y1="43.5" x2="1050" y2="43.5" stroke="#f0b8b8" stroke-width="1" stroke-dasharray="1 1"/><rect x="48" y="15" width="1" height="1" fill="#f0b8b8" fill-opacity="0.5"/><rect x="49" y="15" width="1" height="1" fill="#f0b8b8"/><rect x="1050" y="15" width="2" height="1" fill="#f0b8b8"/><line x1="51" y1="15.5" x2="1050" y2="15.5" stroke="#f0b8b8" stroke-width="1" stroke-dasharray="1 1"/><line x1="466.5" y1="516" x2="466.5" y2="15" stroke="#f0b8b8" stroke-width="1" stroke-dasharray="1 1"/><rect x="466" y="13" width="1" height="2" fill="#f0b8b8"/><rect x="466" y="516" width="1" height="2" fill="#f0b8b8"/><line x1="883.5" y1="516" x2="883.5" y2="15" stroke="#f0b8b8" stroke-width="1" stroke-dasharray="1 1"/><rect x="883" y="13" width="1" height="2" fill="#f0b8b8"/><rect x="883" y="516" width="1" height="2" fill="#f0b8b8"/></g>
<g shape-rendering="crispEdges">
<rect x="51" y="44" width="916" height="2" fill="#0033dd"/>
<rect x="882" y="514" width="85" height="2" fill="#00dda8"/>
</g>
<g shape-rendering="crispEdges">
<rect x="47" y="515" width="1007" height="1" fill="#5e5e5e"/>
<rect x="51" y="515" width="916" height="1" fill="#262626"/>
<rect x="50" y="11" width="1" height="508" fill="#6a6a6a"/>
<line x1="51" y1="515.5" x2="967" y2="515.5" stroke="#552b2b" stroke-width="1" stroke-dasharray="1 1"/>
<line x1="967" y1="515.5" x2="1050" y2="515.5" stroke="#6e4646" stroke-width="1" stroke-dasharray="1 1"/>
<line x1="50.5" y1="516" x2="50.5" y2="15" stroke="#6c4a4a" stroke-width="1" stroke-dasharray="1 1"/>
</g>
<polygon points="1053,512 1053,518.5 1058,515.25" fill="#802020"/>
<polygon points="48,13 54,13 51,8" fill="#802020"/>
<g font-family="Liberation Mono" font-size="10px" fill="#000" stroke="#000" stroke-width="0.05"><text x="44.4" y="491" text-anchor="end">5 k</text><text x="44.4" y="463" text-anchor="end">10 k</text><text x="44.4" y="436" text-anchor="end">15 k</text><text x="44.4" y="408" text-anchor="end">20 k</text><text x="44.4" y="380" text-anchor="end">25 k</text><text x="44.4" y="352" text-anchor="end">30 k</text><text x="44.4" y="325" text-anchor="end">35 k</text><text x="44.4" y="297" text-anchor="end">40 k</text><text x="44.4" y="269" text-anchor="end">45 k</text><text x="44.4" y="241" text-anchor="end">50 k</text><text x="44.4" y="213" text-anchor="end">55 k</text><text x="44.4" y="186" text-anchor="end">60 k</text><text x="44.4" y="158" text-anchor="end">65 k</text><text x="44.4" y="130" text-anchor="end">70 k</text><text x="44.4" y="102" text-anchor="end">75 k</text><text x="44.4" y="75" text-anchor="end">80 k</text><text x="44.4" y="47" text-anchor="end">85 k</text><text x="44.4" y="19" text-anchor="end">90 k</text><text x="32.4" y="519" text-anchor="end">0</text><text x="51.20" y="527" text-anchor="middle">20:59:50</text><text x="134.53" y="527" text-anchor="middle">20:59:51</text><text x="217.87" y="527" text-anchor="middle">20:59:52</text><text x="301.20" y="527" text-anchor="middle">20:59:53</text><text x="384.53" y="527" text-anchor="middle">20:59:54</text><text x="467.87" y="527" text-anchor="middle">20:59:55</text><text x="551.20" y="527" text-anchor="middle">20:59:56</text><text x="634.53" y="527" text-anchor="middle">20:59:57</text><text x="717.87" y="527" text-anchor="middle">20:59:58</text><text x="801.20" y="527" text-anchor="middle">20:59:59</text><text x="884.53" y="527" text-anchor="middle">21:00:00</text><text x="967.87" y="527" text-anchor="middle">21:00:01</text><text x="1051.20" y="527" text-anchor="middle">21:00:02</text></g>
<g font-family="Liberation Mono" font-size="12.0px" letter-spacing="0.578" fill="#000" stroke="#000" stroke-width="0.05"><rect x="15" y="536" width="9" height="10" fill="#000" stroke="none"/><rect x="16" y="537" width="7" height="8" fill="#dd4400" stroke="none"/><text transform="translate(30.40,545) scale(0.9,1)" xml:space="preserve">Windspeed AVG</text><rect x="146" y="536" width="9" height="10" fill="#000" stroke="none"/><rect x="147" y="537" width="7" height="8" fill="#dd7700" stroke="none"/><text transform="translate(161.07,545) scale(0.9,1)" xml:space="preserve">error_number AVG</text><rect x="297" y="536" width="9" height="10" fill="#000" stroke="none"/><rect x="298" y="537" width="7" height="8" fill="#ddaa00" stroke="none"/><text transform="translate(312.73,545) scale(0.9,1)" xml:space="preserve">rotor speed 1 AVG</text><rect x="456" y="536" width="9" height="10" fill="#000" stroke="none"/><rect x="457" y="537" width="7" height="8" fill="#dddd00" stroke="none"/><text transform="translate(471.40,545) scale(0.9,1)" xml:space="preserve">rotor speed 2 AVG</text><rect x="614" y="536" width="9" height="10" fill="#000" stroke="none"/><rect x="615" y="537" width="7" height="8" fill="#aadd00" stroke="none"/><text transform="translate(630.07,545) scale(0.9,1)" xml:space="preserve">rotor speed 3 AVG</text><rect x="773" y="536" width="9" height="10" fill="#000" stroke="none"/><rect x="774" y="537" width="7" height="8" fill="#77dd00" stroke="none"/><text transform="translate(788.73,545) scale(0.9,1)" xml:space="preserve">rotor speed 4 AVG</text><rect x="931" y="536" width="9" height="10" fill="#000" stroke="none"/><rect x="932" y="537" width="7" height="8" fill="#3add00" stroke="none"/><text transform="translate(947.40,545) scale(0.9,1)" xml:space="preserve">rotor speed 5 AVG</text><rect x="15" y="550" width="9" height="10" fill="#000" stroke="none"/><rect x="16" y="551" width="7" height="8" fill="#00dd33" stroke="none"/><text transform="translate(30.40,559) scale(0.9,1)" xml:space="preserve">Current AVG</text><rect x="130" y="550" width="10" height="10" fill="#000" stroke="none"/><rect x="131" y="551" width="8" height="8" fill="#00dda8" stroke="none"/><text transform="translate(145.90,559) scale(0.9,1)" xml:space="preserve">voltage AVG</text><rect x="246" y="550" width="9" height="10" fill="#000" stroke="none"/><rect x="247" y="551" width="7" height="8" fill="#0033dd" stroke="none"/><text transform="translate(261.40,559) scale(0.9,1)" xml:space="preserve">total_energy AVG</text><rect x="396" y="550" width="9" height="10" fill="#000" stroke="none"/><rect x="397" y="551" width="7" height="8" fill="#0000b4" stroke="none"/><text transform="translate(411.90,559) scale(0.9,1)" xml:space="preserve">power_calculated AVG</text><rect x="574" y="550" width="10" height="10" fill="#000" stroke="none"/><rect x="575" y="551" width="8" height="8" fill="#3300dd" stroke="none"/><text transform="translate(590.40,559) scale(0.9,1)" xml:space="preserve">autostart_number AVG</text><rect x="753" y="550" width="9" height="10" fill="#000" stroke="none"/><rect x="754" y="551" width="7" height="8" fill="#aa00dd" stroke="none"/><text transform="translate(768.90,559) scale(0.9,1)" xml:space="preserve">pwm_setpoint AVG</text><rect x="903" y="550" width="9" height="10" fill="#000" stroke="none"/><rect x="904" y="551" width="7" height="8" fill="#dd00aa" stroke="none"/><text transform="translate(919.40,559) scale(0.9,1)" xml:space="preserve">main_state_number AVG</text><rect x="15" y="564" width="9" height="10" fill="#000" stroke="none"/><rect x="16" y="565" width="7" height="8" fill="#595959" stroke="none"/><text transform="translate(30.40,573) scale(0.9,1)" xml:space="preserve">error_number AVG</text></g>
<text transform="translate(1070,6.0) rotate(90) scale(0.88,1)" font-family="Liberation Mono" font-size="8.33px" letter-spacing="0.68" fill="#999999" stroke="#999999" stroke-width="0.15" xml:space="preserve">RRDTOOL / TOBI OETIKER</text></svg></body></html>
